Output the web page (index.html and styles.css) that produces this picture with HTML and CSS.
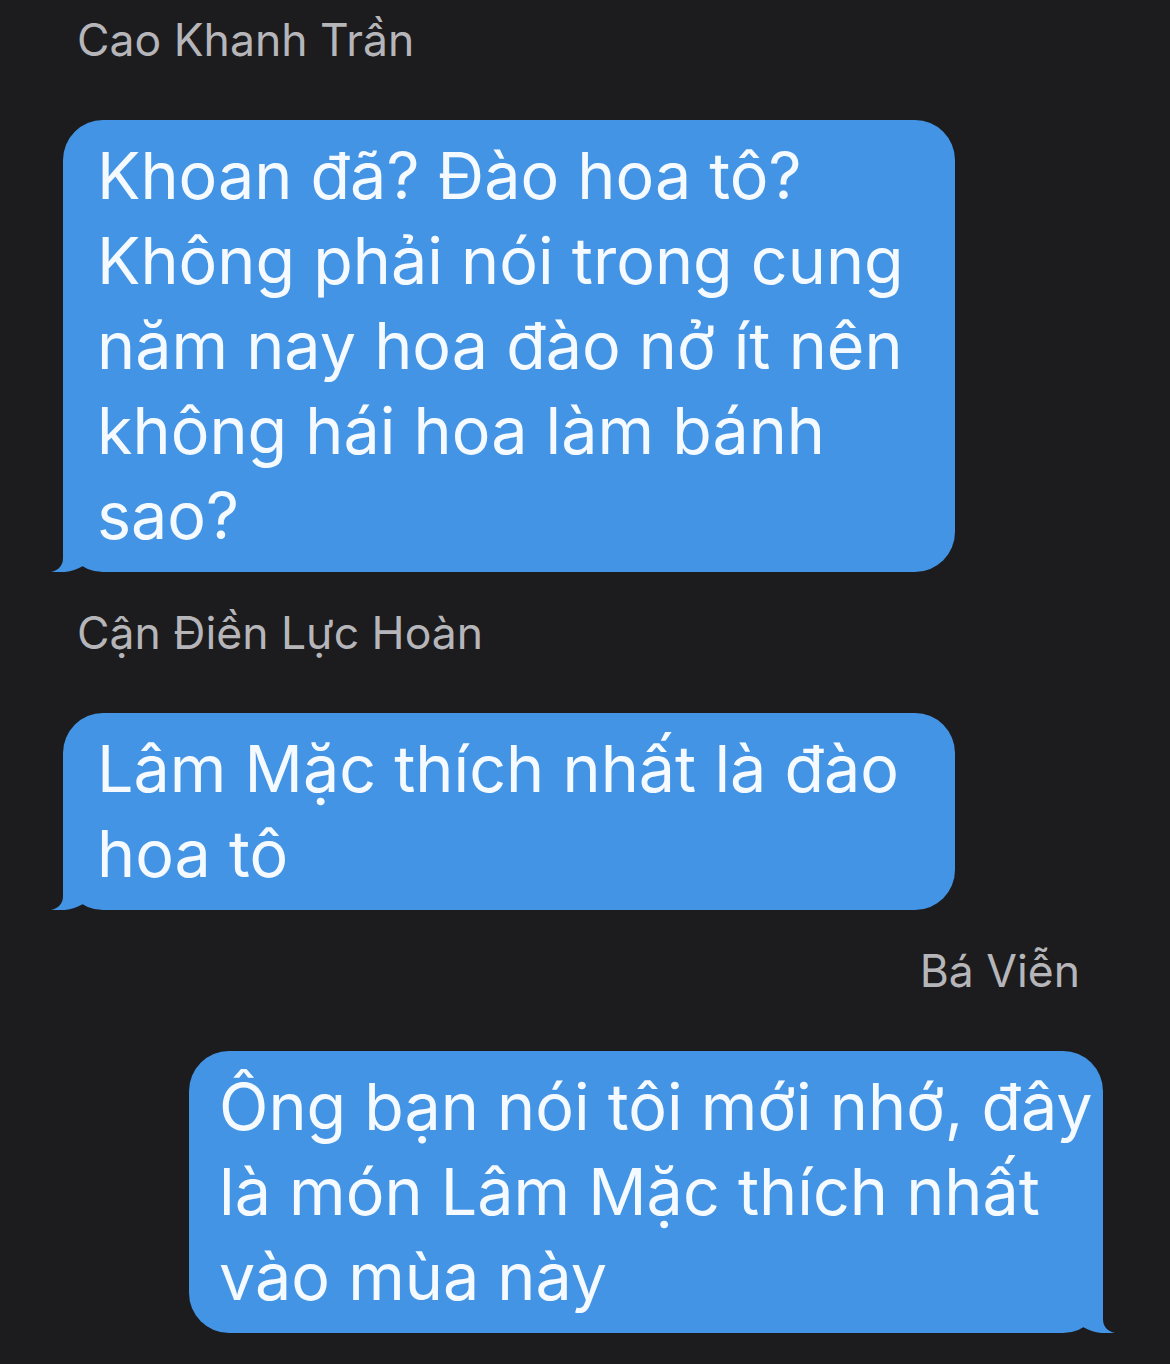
FILE: index.html
```html
<!DOCTYPE html>
<html lang="vi">
<head>
  <meta charset="UTF-8">
  <title>Tin nhắn</title>
  <link rel="stylesheet" href="styles.css">
</head>
<body>

  <div class="chat">
    <div class="name">Cao Khanh Trần</div>
    <div class="bubble in b1">
      Khoan đã? Đào hoa tô?<br>
      Không phải nói trong cung<br>
      năm nay hoa đào nở ít nên<br>
      không hái hoa làm bánh<br>
      sao?
      <svg class="tail" width="40" height="44" viewBox="0 0 40 44"><path d="M12,0 L12,30 Q12,41 0,44 Q18,46 32,38 L32,0 Z"/></svg>
    </div>

    <div class="name">Cận Điền Lực Hoàn</div>
    <div class="bubble in b2">
      Lâm Mặc thích nhất là đào<br>
      hoa tô
      <svg class="tail" width="40" height="44" viewBox="0 0 40 44"><path d="M12,0 L12,30 Q12,41 0,44 Q18,46 32,38 L32,0 Z"/></svg>
    </div>

    <div class="name me">Bá Viễn</div>
    <div class="bubble out b3">
      Ông bạn nói tôi mới nhớ, đây<br>
      là món Lâm Mặc thích nhất<br>
      vào mùa này
      <svg class="tail" width="40" height="44" viewBox="0 0 40 44"><path d="M28,0 L28,30 Q28,41 40,44 Q22,46 8,38 L8,0 Z"/></svg>
    </div>
  </div>

</body>
</html>
```

FILE: styles.css
```css
body {
  margin: 0;
  background: #1c1c1e;
  font-family: Inter, "Noto Sans", sans-serif;
}
.chat {
  display: flex;
  flex-direction: column;
  padding: 15px 67px 0 63px;
}
.name {
  color: #b6b6ba;
  font-size: 44.5px;
  line-height: 50px;
  padding-left: 14px;
  margin-bottom: 55px;
}
.name.me {
  align-self: flex-end;
  padding-left: 0;
  padding-right: 23px;
}
.bubble {
  position: relative;
  background: #4394e4;
  color: #f4faff;
  font-size: 64.6px;
  line-height: 85px;
  border-radius: 40px;
  padding: 13px 20px 14px 34px;
  white-space: nowrap;
  margin-bottom: 36px;
  box-sizing: border-box;
}
.bubble.in {
  align-self: flex-start;
  width: 892px;
}
.bubble.out {
  align-self: flex-end;
  width: 914px;
  padding-left: 30px;
}
.tail {
  position: absolute;
  bottom: 0;
  fill: #4394e4;
}
.bubble.in .tail {
  left: -12px;
}
.bubble.out .tail {
  right: -12px;
}
```
